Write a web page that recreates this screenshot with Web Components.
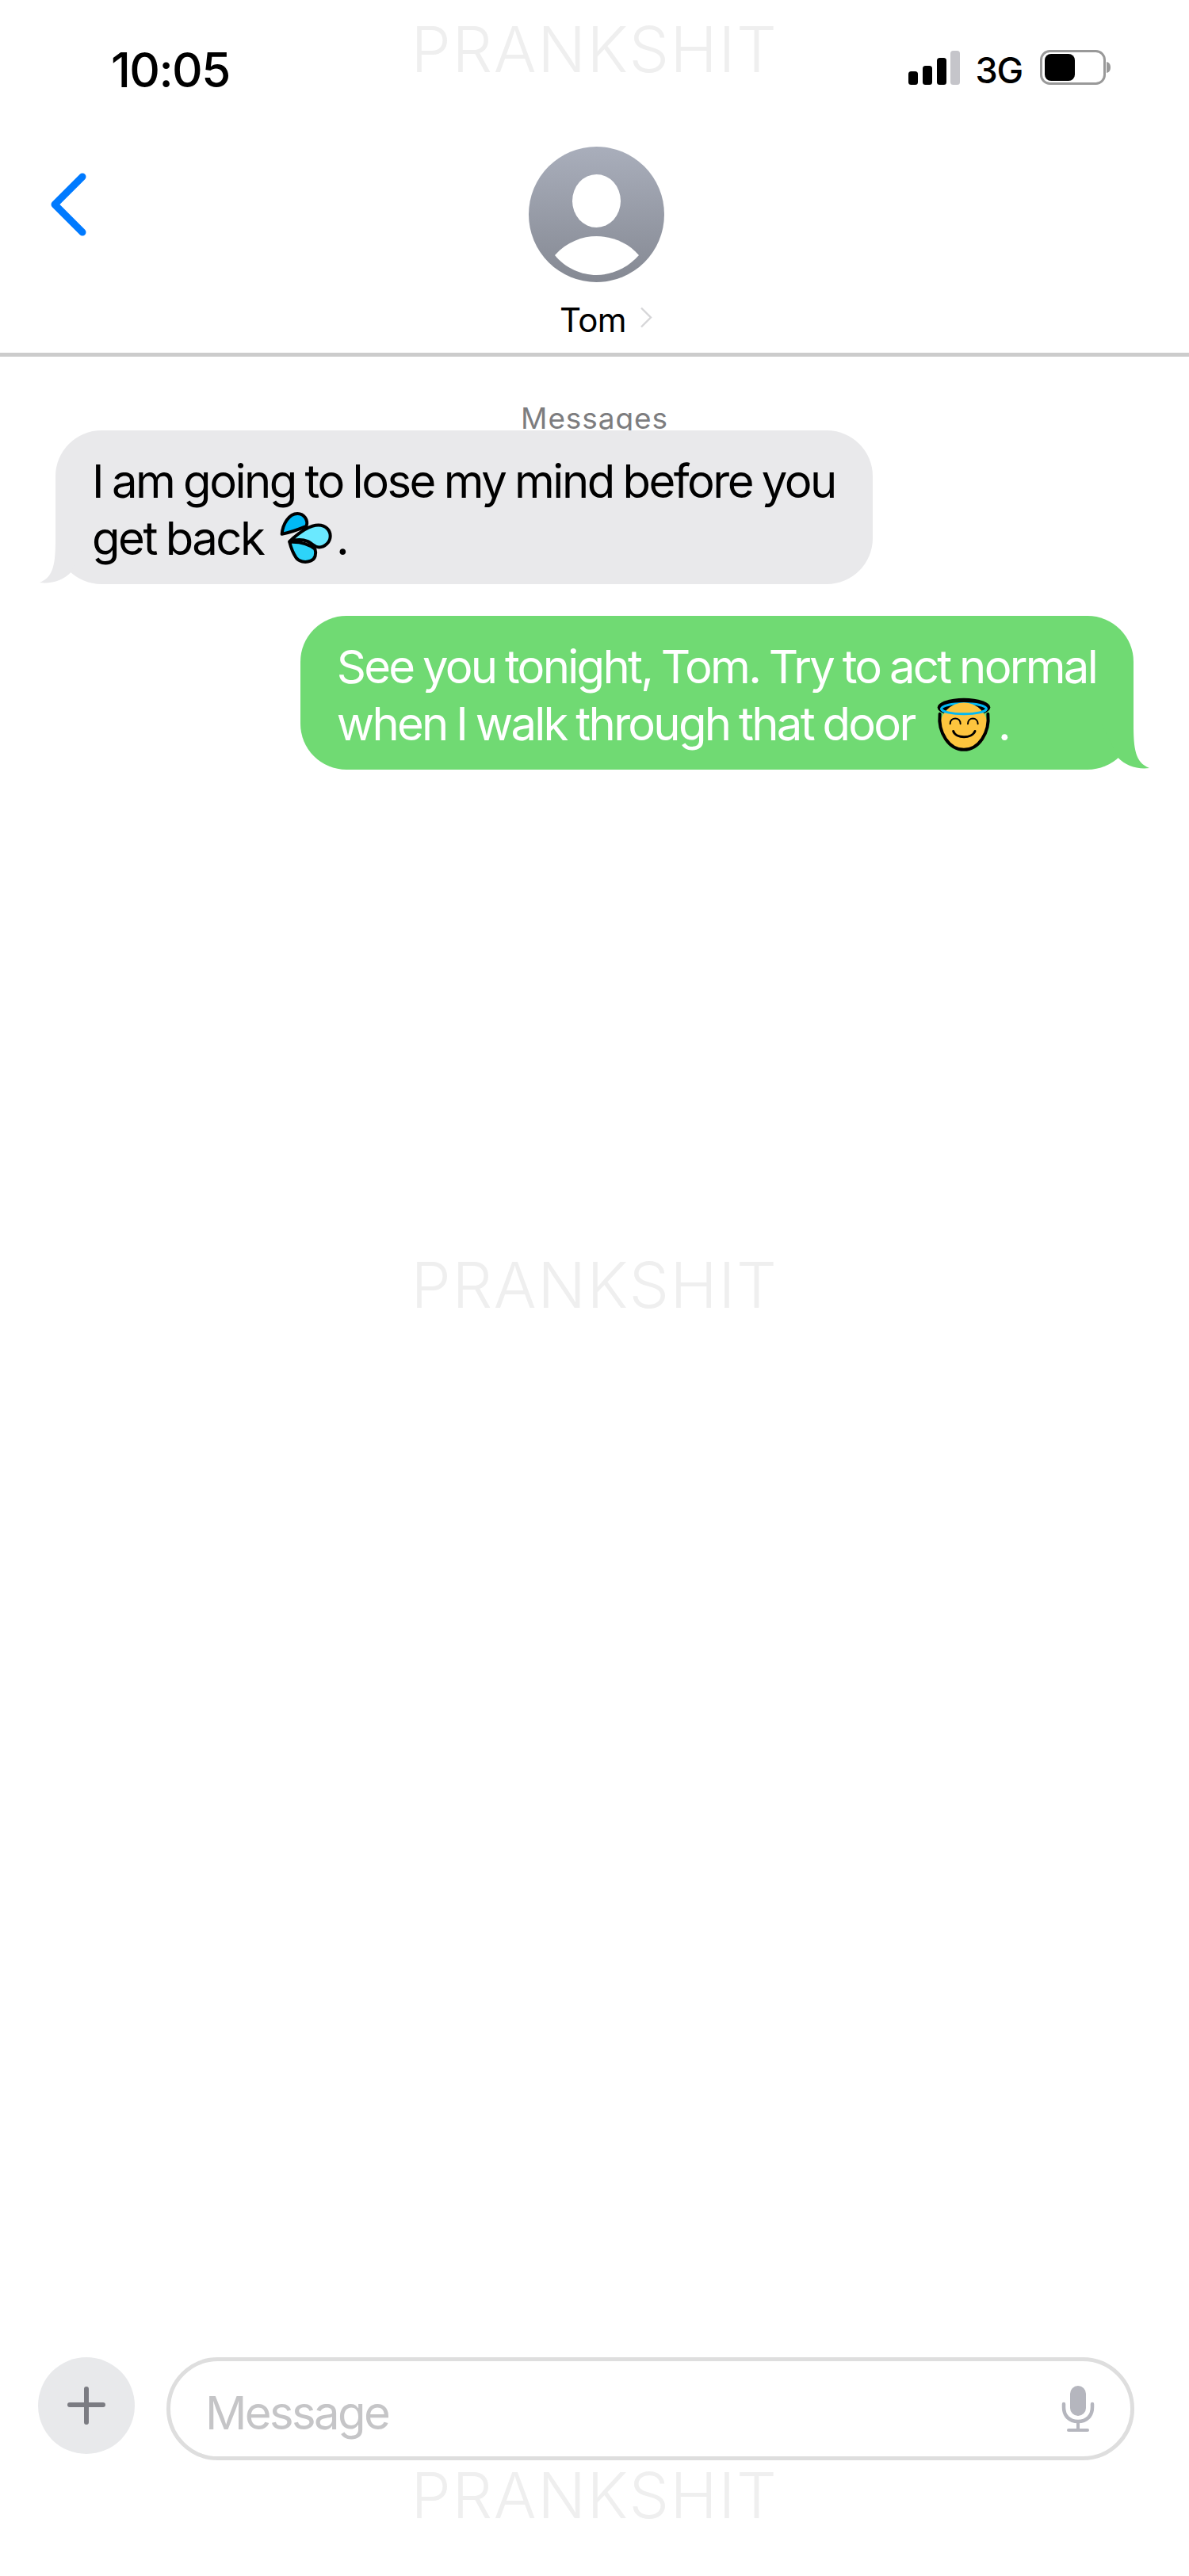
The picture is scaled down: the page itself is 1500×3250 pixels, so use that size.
<!DOCTYPE html>
<html>
<head>
<meta charset="utf-8">
<title>Messages</title>
<style>
html, body{ margin: 0; background: #fff; }
</style>
</head>
<body>
<chat-screen>
    <status-bar time="10:05" network="3G"></status-bar>
    <chat-header name="Tom"></chat-header>
    <message-list>
        <chat-bubble side="in">I am going to lose my mind before you<br>get back <chat-emoji kind="drops"></chat-emoji>.</chat-bubble>
        <chat-bubble side="out">See you tonight, Tom. Try to act normal<br>when I walk through that door <chat-emoji kind="angel"></chat-emoji>.</chat-bubble>
    </message-list>
    <compose-bar placeholder="Message"></compose-bar>
    <water-mark style="top:17px"></water-mark>
    <water-mark style="top:1576px"></water-mark>
    <water-mark style="top:3103px"></water-mark>
</chat-screen>

<script>
const FONT = `Inter, "Liberation Sans", sans-serif`;

function makeTemplate(html){
    const t = document.createElement('template');
    t.innerHTML = html;
    return t;
}

const screenTpl = makeTemplate(`
<style>
:host{
    display: flex;
    flex-direction: column;
    position: relative;
    height: 3250px;
    overflow: hidden;
    background: #fff;
    font-family: ${FONT};
    color: #000;
}
</style>
<slot></slot>
`);

class ChatScreen extends HTMLElement{
    constructor(){
        super();
        this.attachShadow({mode:'open'});
        this.shadowRoot.appendChild(screenTpl.content.cloneNode(true));
    }
}
customElements.define('chat-screen', ChatScreen);

const statusTpl = makeTemplate(`
<style>
:host{
    display: flex;
    justify-content: space-between;
    align-items: flex-start;
    box-sizing: border-box;
    height: 180px;
    padding: 58px 98px 0 140px;
}
#time{
    font-size: 60px;
    line-height: 60px;
    font-weight: 500;
    letter-spacing: -1.6px;
}
.right{
    display: flex;
    align-items: flex-end;
    gap: 20px;
    margin-top: 5px;
}
#net{
    font-size: 45px;
    line-height: 44px;
    font-weight: 500;
    letter-spacing: -1.2px;
    margin-bottom: -4px;
    margin-right: 2px;
}
svg{ display: block; }
</style>
<div id="time"></div>
<div class="right">
    <svg width="65" height="43" viewBox="0 0 65 43">
        <rect x="0" y="26" width="12" height="17" rx="3.5" fill="#000"/>
        <rect x="18" y="19" width="12" height="24" rx="3.5" fill="#000"/>
        <rect x="36" y="9" width="12" height="34" rx="3.5" fill="#000"/>
        <rect x="53" y="0" width="12" height="43" rx="3.5" fill="#c5c5ca"/>
    </svg>
    <div id="net"></div>
    <svg width="90" height="44" viewBox="0 0 90 44">
        <rect x="1.5" y="1.5" width="80" height="41" rx="11" fill="#fff" stroke="#999" stroke-width="3"/>
        <rect x="6" y="5" width="38" height="34" rx="8" fill="#000"/>
        <path d="M84 15 C88 16 89 19 89 22 C89 25 88 28 84 29 Z" fill="#999"/>
    </svg>
</div>
`);

class StatusBar extends HTMLElement{
    constructor(){
        super();
        this.attachShadow({mode:'open'});
        this.shadowRoot.appendChild(statusTpl.content.cloneNode(true));
        this.shadowRoot.querySelector('#time').textContent = this.getAttribute('time');
        this.shadowRoot.querySelector('#net').textContent = this.getAttribute('network');
    }
}
customElements.define('status-bar', StatusBar);

const headerTpl = makeTemplate(`
<style>
:host{
    display: grid;
    grid-template-columns: 667px 171px 1fr;
    box-sizing: border-box;
    height: 270px;
    padding-top: 5px;
    border-bottom: 5px solid #cccccc;
}
.back{
    margin: 33px 0 0 63px;
    width: 46px;
    height: 80px;
}
.name-row{
    display: flex;
    align-items: flex-start;
    gap: 17px;
    margin-top: 23px;
    padding-left: 39px;
    white-space: nowrap;
}
.name-row svg{
    margin-top: 8px;
}
#name{
    font-size: 42px;
    line-height: 50px;
    font-weight: 400;
    letter-spacing: -0.6px;
}
svg{ display: block; }
</style>
<svg class="back" viewBox="0 0 46 80">
    <path d="M41 5 L6 40 L41 75" fill="none" stroke="#007aff" stroke-width="9" stroke-linecap="round" stroke-linejoin="round"/>
</svg>
<div>
    <svg width="171" height="171" viewBox="0 0 171 171">
        <defs>
            <linearGradient id="av" x1="0" y1="0" x2="0" y2="1">
                <stop offset="0" stop-color="#a9aebb"/>
                <stop offset="1" stop-color="#858993"/>
            </linearGradient>
        </defs>
        <circle cx="85.5" cy="85.5" r="85.5" fill="url(#av)"/>
        <ellipse cx="85.5" cy="68.5" rx="30.5" ry="33.5" fill="#fff"/>
        <path d="M33 137 C48 120 68 113 85.5 113 C103 113 125 120 139 137 C125 153 105 162 85.5 162 C66 162 46 153 33 137Z" fill="#fff"/>
    </svg>
    <div class="name-row">
        <span id="name"></span>
        <svg width="16" height="27" viewBox="0 0 16 27"><path d="M2 1.5 L14 13.5 L2 25.5" fill="none" stroke="#d6d6d8" stroke-width="2.4"/></svg>
    </div>
</div>
`);

class ChatHeader extends HTMLElement{
    constructor(){
        super();
        this.attachShadow({mode:'open'});
        this.shadowRoot.appendChild(headerTpl.content.cloneNode(true));
        this.shadowRoot.querySelector('#name').textContent = this.getAttribute('name');
    }
}
customElements.define('chat-header', ChatHeader);

const listTpl = makeTemplate(`
<style>
:host{
    display: flex;
    flex-direction: column;
    flex: 1;
    box-sizing: border-box;
    padding-top: 58px;
}
.label{
    text-align: center;
    font-size: 37px;
    line-height: 40px;
    color: #7d7d7f;
    letter-spacing: 0.9px;
    margin-bottom: -5px;
}
.items{
    display: flex;
    flex-direction: column;
    gap: 40px;
}
</style>
<div class="label">Messages</div>
<div class="items"><slot></slot></div>
`);

class MessageList extends HTMLElement{
    constructor(){
        super();
        this.attachShadow({mode:'open'});
        this.shadowRoot.appendChild(listTpl.content.cloneNode(true));
    }
}
customElements.define('message-list', MessageList);

const bubbleTpl = makeTemplate(`
<style>
:host{
    display: block;
    position: relative;
    width: fit-content;
    box-sizing: border-box;
    padding: 28px 47px 22px 46px;
    border-radius: 58px;
    font-size: 58px;
    line-height: 72px;
    word-spacing: -2px;
    white-space: nowrap;
}
:host([side="in"]){
    margin-left: 70px;
    background: #e9e9eb;
    color: #000;
    letter-spacing: -2.5px;
}
:host([side="out"]){
    align-self: flex-end;
    margin-right: 70px;
    background: #70da73;
    color: #fff;
    letter-spacing: -2.72px;
}
.tail{
    position: absolute;
    bottom: 0;
    width: 60px;
    height: 57px;
}
:host([side="in"]) .tail{
    left: -20px;
    fill: #e9e9eb;
}
:host([side="out"]) .tail{
    right: -20px;
    fill: #70da73;
    transform: scaleX(-1);
}
</style>
<slot></slot>
<svg class="tail" viewBox="0 0 60 57"><path d="M20 0 C20 30 18 48 0 55 C15 57 30 52 39.5 42 L60 0Z"/></svg>
`);

class ChatBubble extends HTMLElement{
    constructor(){
        super();
        this.attachShadow({mode:'open'});
        this.shadowRoot.appendChild(bubbleTpl.content.cloneNode(true));
    }
}
customElements.define('chat-bubble', ChatBubble);

const DROPS = `
<svg width="68" height="68" viewBox="60 40 205 205" stroke="#000" stroke-width="12" stroke-linejoin="round">
    <path d="M71 130 C74 92 98 52 130 52 C156 52 172 78 164 100 C145 108 110 122 71 130Z" fill="#00b9f5"/>
    <path d="M100 160 C105 180 115 205 125 220 C135 235 160 240 180 232 C198 225 203 205 197 187 C170 165 135 158 100 160Z" fill="#2dd4f9"/>
    <path d="M100 158 C130 130 170 96 210 96 C238 96 255 116 255 137 C255 160 235 180 212 180 C195 180 190 168 170 158 C150 150 125 150 100 158Z" fill="#6ae9ff"/>
</svg>`;

const ANGEL = `
<svg width="70" height="72" viewBox="60 50 210 215" fill="none" stroke-linecap="round">
    <ellipse cx="165" cy="93" rx="100" ry="35" fill="#000"/>
    <ellipse cx="165" cy="98" rx="85" ry="20" stroke="#00b9f5" stroke-width="9"/>
    <circle cx="165" cy="165" r="90" fill="#fdc53e"/>
    <path d="M74 118 C66 190 110 253 165 253 C220 253 264 190 256 118" stroke="#000" stroke-width="12"/>
    <path d="M80 98 A85 20 0 0 0 250 98" stroke="#00b9f5" stroke-width="9"/>
    <path d="M113 155 C113 128 152 128 152 155 M180 155 C180 128 218 128 218 155" stroke="#000" stroke-width="6"/>
    <path d="M125 183 C135 212 195 212 207 183" stroke="#000" stroke-width="9"/>
</svg>`;

const emojiTpl = makeTemplate(`
<style>
:host{
    display: inline-block;
    line-height: 0;
}
:host([kind="drops"]){ margin: -12px 4px -12px 8px; vertical-align: 0; }
:host([kind="angel"]){ margin: -12px 8px -12px 16px; vertical-align: -4px; }
svg{ display: block; }
</style>
<span id="box"></span>
`);

class ChatEmoji extends HTMLElement{
    constructor(){
        super();
        this.attachShadow({mode:'open'});
        this.shadowRoot.appendChild(emojiTpl.content.cloneNode(true));
        this.shadowRoot.querySelector('#box').innerHTML = this.getAttribute('kind') === 'drops' ? DROPS : ANGEL;
    }
}
customElements.define('chat-emoji', ChatEmoji);

const composeTpl = makeTemplate(`
<style>
:host{
    display: flex;
    align-items: flex-start;
    gap: 40px;
    box-sizing: border-box;
    padding: 0 69px 146px 48px;
}
.plus{
    flex: none;
    width: 122px;
    height: 122px;
    border-radius: 50%;
    background: #e8e9eb;
    display: flex;
    align-items: center;
    justify-content: center;
}
.field{
    flex: 1;
    box-sizing: border-box;
    height: 130px;
    border: 5px solid #dedede;
    border-radius: 65px;
    display: flex;
    align-items: center;
    justify-content: space-between;
    padding: 0 45px 0 44px;
}
#ph{
    font-size: 58px;
    line-height: 72px;
    letter-spacing: -2.6px;
    color: #c5c5c7;
    margin-top: 9px;
}
svg{ display: block; }
</style>
<div class="plus">
    <svg width="48" height="48" viewBox="0 0 48 48">
        <path d="M24 3 V45 M3 23 H45" stroke="#7b7c82" stroke-width="6" stroke-linecap="round"/>
    </svg>
</div>
<div class="field">
    <span id="ph"></span>
    <svg width="42" height="58" viewBox="0 0 42 58" fill="none">
        <rect x="11" y="0" width="20" height="38" rx="10" fill="#b5b6be"/>
        <path d="M3 23 V27 C3 38 10 45 21 45 C32 45 39 38 39 27 V23" stroke="#b5b6be" stroke-width="4.5" stroke-linecap="round"/>
        <path d="M21 45 V55" stroke="#b5b6be" stroke-width="4"/>
        <rect x="7" y="54" width="28" height="4" rx="2" fill="#b5b6be"/>
    </svg>
</div>
`);

class ComposeBar extends HTMLElement{
    constructor(){
        super();
        this.attachShadow({mode:'open'});
        this.shadowRoot.appendChild(composeTpl.content.cloneNode(true));
        this.shadowRoot.querySelector('#ph').textContent = this.getAttribute('placeholder');
    }
}
customElements.define('compose-bar', ComposeBar);

const markTpl = makeTemplate(`
<style>
:host{
    display: block;
    position: absolute;
    left: 0;
    right: 0;
    text-align: center;
    font-size: 80px;
    line-height: 90px;
    font-weight: 300;
    letter-spacing: 1.6px;
    color: #efefef;
    pointer-events: none;
}
</style>
PRANKSHIT
`);

class WaterMark extends HTMLElement{
    constructor(){
        super();
        this.attachShadow({mode:'open'});
        this.shadowRoot.appendChild(markTpl.content.cloneNode(true));
    }
}
customElements.define('water-mark', WaterMark);
</script>
</body>
</html>
